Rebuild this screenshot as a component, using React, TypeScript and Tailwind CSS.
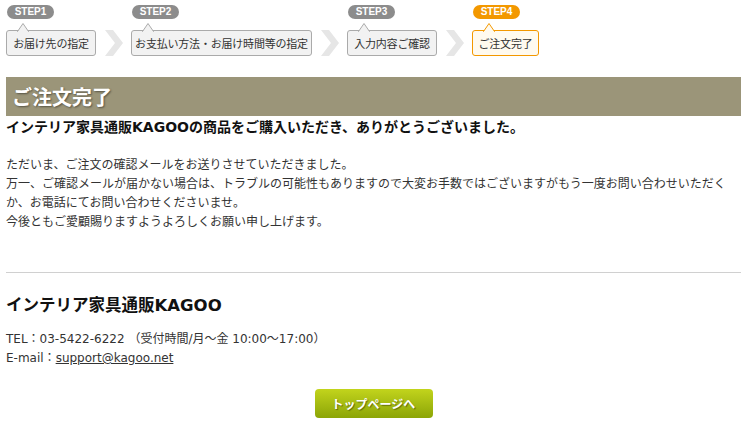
const steps = [
  { label: 'STEP1', text: 'お届け先の指定', w: 'w-[90px]', active: false },
  { label: 'STEP2', text: 'お支払い方法・お届け時間等の指定', w: 'w-[181px]', active: false },
  { label: 'STEP3', text: '入力内容ご確認', w: 'w-[90px]', active: false },
  { label: 'STEP4', text: 'ご注文完了', w: 'w-[67px]', active: true },
]

function Chevron() {
  return (
    <div className="flex h-[26px] w-[35px] items-center justify-center self-end">
      <svg width="20" height="26" viewBox="0 0 20 26">
        <polygon points="1,0 9,0 19,13 9,26 1,26 11,13" fill="#e6e6e6" />
      </svg>
    </div>
  )
}

function Step({ label, text, w, active }: (typeof steps)[number]) {
  const border = active ? '#f39800' : '#aaaaaa'
  const bg = active ? '#fffaef' : '#f2f2f2'
  return (
    <div className="flex flex-col items-start">
      <div
        className={`ml-px h-[14px] w-[47px] rounded-full text-center font-['Liberation_Sans',sans-serif] text-[10px] font-bold leading-[14px] text-white ${
          active ? 'bg-[#f39800]' : 'bg-[#8c8c8c]'
        }`}
      >
        {label}
      </div>
      <div
        className={`relative mt-[11px] h-[26px] ${w} rounded-[3px] border text-center font-['Noto_Sans_CJK_JP',sans-serif] text-[11px] leading-[24px] tracking-[-0.2px] text-[#333] ${
          active ? 'border-[#f39800] bg-[#fffaef]' : 'border-[#aaaaaa] bg-[#f2f2f2]'
        }`}
      >
        <svg className="absolute -top-[8px] left-[10px]" width="12" height="9" viewBox="0 0 12 9">
          <polygon points="0.5,8.5 6,0.5 11.5,8.5" fill={bg} stroke={border} strokeWidth="1" />
          <rect x="1" y="8" width="10" height="2" fill={bg} />
        </svg>
        {text}
      </div>
    </div>
  )
}

export default function App() {
  return (
    <div className="min-h-[428px] w-[747px] bg-white font-['DejaVu_Sans','Noto_Sans_CJK_JP',sans-serif] text-[#333]">
      <div className="flex items-start pl-[6px] pt-[5px]">
        {steps.map((s, i) => (
          <div key={s.label} className="flex items-end">
            <Step {...s} />
            {i < steps.length - 1 && <Chevron />}
          </div>
        ))}
      </div>

      <div className="mx-[6px]">
        <h1 className="mt-[21px] h-[39px] bg-[#9b9579] pl-[6px] font-['Noto_Sans_CJK_JP',sans-serif] text-[20px] font-bold leading-[39px] text-white [text-shadow:1px_1px_2px_rgba(0,0,0,0.45)]">
          ご注文完了
        </h1>
        <p className="text-[14px] font-bold leading-[22px] text-[#111]">
          インテリア家具通販KAGOOの商品をご購入いただき、ありがとうございました。
        </p>

        <div className="mt-[18px] w-[728px] text-[12px] leading-[19px] text-[#333]">
          <p>ただいま、ご注文の確認メールをお送りさせていただきました。</p>
          <p>
            万一、ご確認メールが届かない場合は、トラブルの可能性もありますので大変お手数ではございますがもう一度お問い合わせいただくか、お電話にてお問い合わせくださいませ。
          </p>
          <p>今後ともご愛顧賜りますようよろしくお願い申し上げます。</p>
        </div>

        <hr className="mt-[40px] border-t border-[#d0d0d0]" />

        <h2 className="mt-[22px] text-[16.5px] font-bold leading-[22px] text-[#111]">インテリア家具通販KAGOO</h2>
        <div className="mt-[13px] text-[12px] leading-[19px] text-[#333]">
          <p>TEL：03-5422-6222 （受付時間/月～金 10:00～17:00）</p>
          <p>
            E-mail：<a className="underline">support@kagoo.net</a>
          </p>
        </div>

        <div className="mt-[21px] flex justify-center">
          <button className="h-[29px] w-[118px] rounded-[4px] bg-gradient-to-b from-[#c2d41c] to-[#8ca506] font-['Noto_Sans_CJK_JP',sans-serif] text-[12px] font-bold text-white [text-shadow:1px_1px_1px_rgba(0,0,0,0.4)]">
            トップページへ
          </button>
        </div>
      </div>
    </div>
  )
}
